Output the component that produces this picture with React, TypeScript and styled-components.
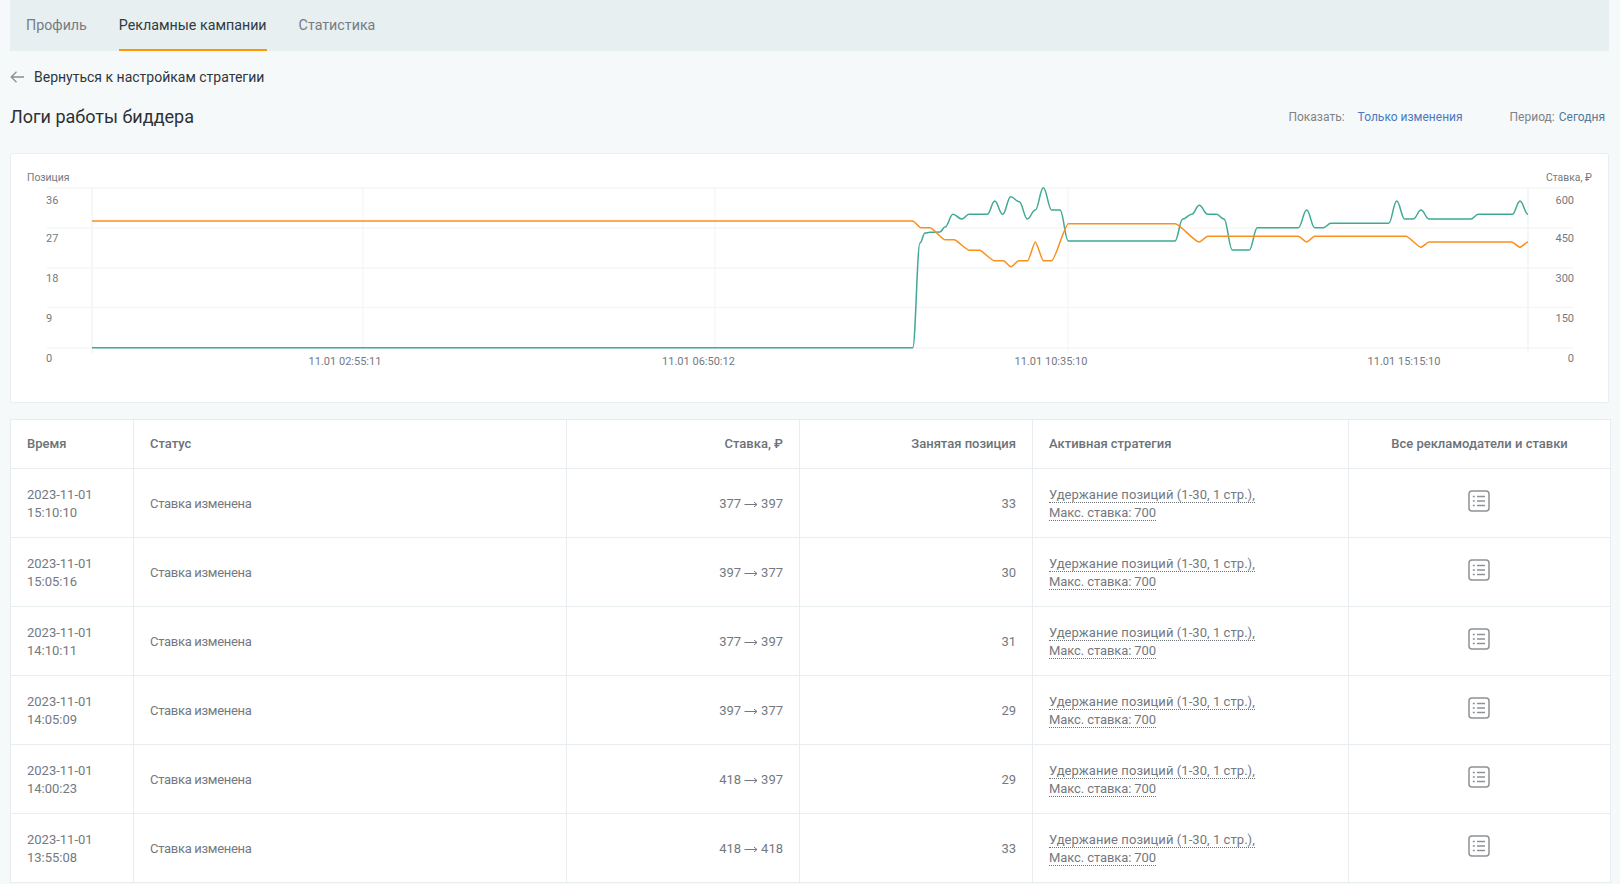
import React from 'react';
import styled, { createGlobalStyle } from 'styled-components';

const GlobalStyle = createGlobalStyle`
  html, body {
    margin: 0;
    padding: 0;
    background: #f6f9fa;
    overflow: hidden;
  }
  * {
    box-sizing: border-box;
  }
`;

const Page = styled.div`
  height: 884px;
  overflow: hidden;
  padding: 0 10px;
  font-family: Roboto, 'Noto Sans', sans-serif;
  color: #2f3438;
`;

const TabBar = styled.nav`
  display: flex;
  gap: 32px;
  height: 51px;
  padding-left: 16px;
  margin-right: 1px;
  background: #e8eff0;
`;

const Tab = styled.a<{ $active?: boolean }>`
  display: block;
  height: 51px;
  padding-top: 16px;
  font-size: 14.25px;
  line-height: 18px;
  color: ${({ $active }) => ($active ? '#2f3a42' : '#757c82')};
  border-bottom: 2px solid ${({ $active }) => ($active ? '#ff9800' : 'transparent')};
`;

const BackLink = styled.a`
  display: flex;
  align-items: center;
  gap: 10px;
  height: 18px;
  margin-top: 17px;
  font-size: 14px;
  color: #30363c;
`;

const HeaderRow = styled.div`
  display: flex;
  align-items: center;
  justify-content: space-between;
  height: 26px;
  margin-top: 18px;
`;

const Title = styled.h1`
  margin: 0 0 2px;
  font-size: 18px;
  font-weight: 400;
  color: #2b3136;
`;

const Filters = styled.div`
  display: flex;
  gap: 47px;
  padding-right: 5px;
  font-size: 12px;
`;

const Filter = styled.div<{ $gap: number }>`
  display: flex;
  gap: ${({ $gap }) => $gap}px;
`;

const FilterLabel = styled.span`
  color: #7e8388;
`;

const FilterValue = styled.a<{ $color: string }>`
  color: ${({ $color }) => $color};
`;

const ChartCard = styled.section`
  height: 250px;
  margin-top: 23px;
  margin-right: 1px;
  background: #fff;
  border: 1px solid #e9eff0;
  border-radius: 2px;
`;

const ChartSvg = styled.svg`
  display: block;
  width: 100%;
  height: 100%;
`;

const AxisText = styled.text<{ $small?: boolean }>`
  font-family: Roboto, sans-serif;
  font-size: ${({ $small }) => ($small ? '10.4px' : '11px')};
  fill: #74797f;
`;

const Table = styled.table`
  width: 1600px;
  margin-top: 16px;
  table-layout: fixed;
  border-collapse: collapse;
  background: #fff;
  font-size: 13px;
  line-height: 18px;
  color: #74797f;
`;

const HeadCell = styled.th<{ $align?: string }>`
  height: 49px;
  padding: 0 16px;
  border: 1px solid #e8eef0;
  font-size: 13px;
  font-weight: 500;
  color: #6c7278;
  text-align: ${({ $align }) => $align || 'left'};
`;

const Cell = styled.td<{ $align?: string }>`
  height: 69px;
  padding: 2px 16px 0;
  border: 1px solid #e8eef0;
  text-align: ${({ $align }) => $align || 'left'};
`;

const StatusCell = styled(Cell)`
  letter-spacing: -0.3px;
`;

const StrategyLink = styled.span<{ $tight?: boolean }>`
  border-bottom: 1px dotted #6c7278;
  letter-spacing: ${({ $tight }) => ($tight ? '-0.1px' : '0.06px')};
`;

const BidArrow = styled.svg`
  margin: 0 3px 1px;
  vertical-align: middle;
`;

const IconCell = styled(Cell)`
  padding: 0 2px 4px 0;
  text-align: center;
`;

const ListButton = styled.button`
  display: inline-flex;
  padding: 0;
  border: 0;
  background: none;
  vertical-align: middle;
`;

const BackArrow = () => (
  <svg width="14" height="12" viewBox="0 0 14 12" fill="none" stroke="#8a8f94" strokeWidth="1.3">
    <path d="M14 6H1M6.5 .8 1.2 6l5.3 5.2" />
  </svg>
);

const ListIcon = () => (
  <svg width="22" height="22" viewBox="0 0 22 22" fill="none" stroke="#8e9296" strokeWidth="1.5">
    <rect x="1" y="1" width="20" height="20" rx="3" />
    <path d="M9 6.5h8M9 11h8M9 15.5h8M4.8 6.5h2M4.8 11h2M4.8 15.5h2" />
  </svg>
);

// points are taken from the picture, in page pixels
const teal: number[][] = [
  [92, 347.7], [912.7, 347.7], [920, 243], [925, 233], [930, 232.3], [940, 232], [945, 227], [953, 214.3],
  [961.7, 219], [969, 214.3], [987.3, 214.3], [994.7, 201], [1002.7, 214.3], [1010.7, 196.7], [1019.3, 201.7],
  [1027.3, 219], [1035.3, 210], [1043.3, 187.7], [1051.7, 210], [1060, 210], [1068.3, 241], [1175, 241],
  [1182.7, 219], [1191.7, 214.3], [1199.3, 205.3], [1207.7, 214.3], [1216.7, 214.3], [1224, 219], [1232.3, 250],
  [1249.3, 250], [1257.3, 227.7], [1298.3, 227.7], [1306.7, 210], [1314.7, 227.7], [1323.3, 227.7], [1331, 223.3],
  [1388.7, 223.3], [1396.7, 201], [1404.7, 219], [1413.3, 219], [1421, 210], [1429, 219], [1470.7, 219],
  [1478.3, 214.3], [1512.3, 214.3], [1520, 201], [1528, 214.3],
];

const orange: number[][] = [
  [92, 221], [912.7, 221], [920.7, 227.7], [930, 227.7], [945, 239.7], [954, 239.7], [969.3, 250.3], [979.3, 250.3],
  [994.3, 260.7], [1003.3, 260.7], [1011, 266.7], [1018.7, 260.7], [1027.7, 260.7], [1035.3, 242], [1043.3, 260.7],
  [1051.7, 260.7], [1068.3, 223.7], [1175, 223.7], [1199.3, 242], [1207.7, 236.3], [1298.3, 236.3], [1306.7, 242],
  [1314.7, 236.3], [1406, 236.3], [1421, 247.3], [1429, 242], [1511.7, 242], [1520, 247.3], [1528, 242],
];

const smoothPath = (pts: number[][], k: number) =>
  pts
    .map(([x, y], i) => {
      if (i === 0) return `M${x} ${y}`;
      const [px, py] = pts[i - 1];
      const dx = (x - px) * k;
      return `C${px + dx} ${py} ${x - dx} ${y} ${x} ${y}`;
    })
    .join('');

const gridY = [188, 228, 268, 307.5, 348];
const leftLabels = ['36', '27', '18', '9', '0'];
const rightLabels = ['600', '450', '300', '150', '0'];
const labelY = [204, 242, 282, 322, 362];
const gridX = [92, 363, 715, 1068, 1528];
const timeLabels: [number, string][] = [
  [345, '11.01 02:55:11'],
  [698.5, '11.01 06:50:12'],
  [1051, '11.01 10:35:10'],
  [1404, '11.01 15:15:10'],
];

const Chart = () => (
  <ChartSvg viewBox="11 154 1597 248">
    <AxisText $small x="27" y="181">Позиция</AxisText>
    <AxisText $small x="1592" y="181" textAnchor="end">Ставка, ₽</AxisText>
    {gridY.map((y, i) => (
      <g key={y}>
        <line x1="47" x2="1573" y1={y} y2={y} stroke="#f5f7f7" strokeWidth="1.5" />
        <AxisText x="46" y={labelY[i]}>{leftLabels[i]}</AxisText>
        <AxisText x="1574" y={labelY[i]} textAnchor="end">{rightLabels[i]}</AxisText>
      </g>
    ))}
    {gridX.map((x, i) => (
      <line
        key={x}
        x1={x}
        x2={x}
        y1="188"
        y2="353"
        stroke="#f1f5f5"
        strokeWidth={i === 0 || i === 4 ? 1.5 : 1}
      />
    ))}
    {timeLabels.map(([x, label]) => (
      <AxisText key={label} x={x} y="365" textAnchor="middle">{label}</AxisText>
    ))}
    <path d={smoothPath(teal, 0.4)} fill="none" stroke="#3fa996" strokeWidth="1.5" />
    <path d={smoothPath(orange, 0.2)} fill="none" stroke="#fb8f1c" strokeWidth="1.5" />
  </ChartSvg>
);

const rows = [
  ['15:10:10', '377', '397', '33'],
  ['15:05:16', '397', '377', '30'],
  ['14:10:11', '377', '397', '31'],
  ['14:05:09', '397', '377', '29'],
  ['14:00:23', '418', '397', '29'],
  ['13:55:08', '418', '418', '33'],
];

const columnWidths = [123, 433, 233, 233, 316, 262];

const App: React.FC = () => (
  <Page>
    <GlobalStyle />
    <TabBar>
      <Tab>Профиль</Tab>
      <Tab $active>Рекламные кампании</Tab>
      <Tab>Статистика</Tab>
    </TabBar>
    <BackLink>
      <BackArrow />
      Вернуться к настройкам стратегии
    </BackLink>
    <HeaderRow>
      <Title>Логи работы биддера</Title>
      <Filters>
        <Filter $gap={13}>
          <FilterLabel>Показать:</FilterLabel>
          <FilterValue $color="#4c78bd">Только изменения</FilterValue>
        </Filter>
        <Filter $gap={4}>
          <FilterLabel>Период:</FilterLabel>
          <FilterValue $color="#4f7a9c">Сегодня</FilterValue>
        </Filter>
      </Filters>
    </HeaderRow>
    <ChartCard>
      <Chart />
    </ChartCard>
    <Table>
      <colgroup>
        {columnWidths.map((w, i) => (
          <col key={i} width={w} />
        ))}
      </colgroup>
      <thead>
        <tr>
          <HeadCell>Время</HeadCell>
          <HeadCell>Статус</HeadCell>
          <HeadCell $align="right">Ставка, ₽</HeadCell>
          <HeadCell $align="right">Занятая позиция</HeadCell>
          <HeadCell>Активная стратегия</HeadCell>
          <HeadCell $align="center">Все рекламодатели и ставки</HeadCell>
        </tr>
      </thead>
      <tbody>
        {rows.map(([time, from, to, position]) => (
          <tr key={time}>
            <Cell>
              2023-11-01
              <br />
              {time}
            </Cell>
            <StatusCell>Ставка изменена</StatusCell>
            <Cell $align="right">
              {from}
              <BidArrow width="14" height="7" viewBox="0 0 14 7" fill="none" stroke="#74797f" strokeWidth="1">
                <path d="M0.5 3.5H13M10 1l3 2.5L10 6" />
              </BidArrow>
              {to}
            </Cell>
            <Cell $align="right">{position}</Cell>
            <Cell>
              <StrategyLink>Удержание позиций (1-30, 1 стр.),</StrategyLink>
              <br />
              <StrategyLink $tight>Макс. ставка: 700</StrategyLink>
            </Cell>
            <IconCell>
              <ListButton>
                <ListIcon />
              </ListButton>
            </IconCell>
          </tr>
        ))}
      </tbody>
    </Table>
  </Page>
);

export default App;
